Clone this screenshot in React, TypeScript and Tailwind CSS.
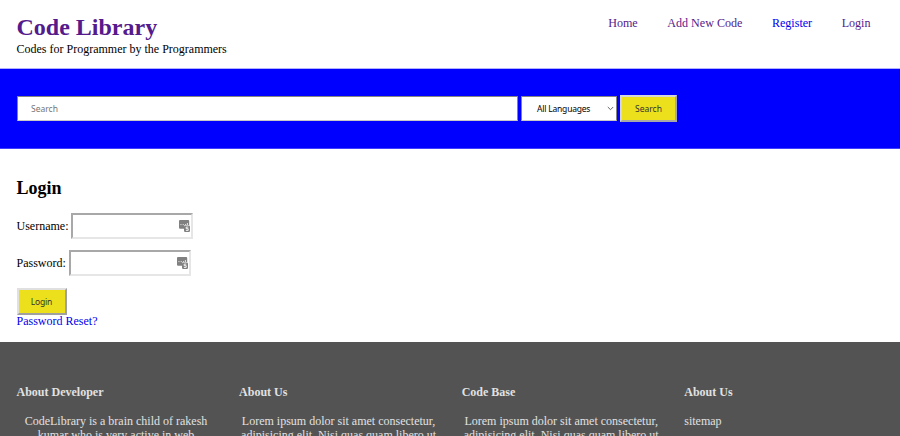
import React from "react";

const ui = "font-['Noto_Sans','Open_Sans',sans-serif]";

function ManagerIcon() {
  return (
    <svg width="11" height="12" viewBox="0 0 11 12" aria-hidden="true">
      <path d="M1 0h8.2a1 1 0 0 1 1 1v4H6a1 1 0 0 0-1 1v2.8H1a1 1 0 0 1-1-1V1a1 1 0 0 1 1-1z" fill="#808080" />
      <path d="M1.4 4.6h1.1M3.7 4.6h1.1M6 4.6h1.1M8.4 3v2" stroke="#fff" strokeWidth="0.8" />
      <rect x="5" y="5.4" width="6" height="6.6" rx="1.2" fill="#808080" />
      <path d="M9.3 7.1H7.2v1.6h2v1.7H6.9" fill="none" stroke="#fff" strokeWidth="0.9" />
    </svg>
  );
}

function Field({ label, type }: { label: string; type: string }) {
  return (
    <label className="flex h-[26px] items-center gap-[3px]">
      <span>{label}</span>
      <span className="flex h-[26px] w-[122px] items-center border-2 border-t-[#a8a8a8] border-l-[#a8a8a8] border-r-[#e6e6e6] border-b-[#e6e6e6] bg-white pr-px">
        <input type={type} className="min-w-0 flex-1 outline-none" />
        <ManagerIcon />
      </span>
    </label>
  );
}

const columns = [
  { title: "About Developer", text: "CodeLibrary is a brain child of rakesh kumar who is very active in web" },
  { title: "About Us", text: "Lorem ipsum dolor sit amet consectetur, adipisicing elit. Nisi quas quam libero ut" },
  { title: "Code Base", text: "Lorem ipsum dolor sit amet consectetur, adipisicing elit. Nisi quas quam libero ut" },
];

export default function App() {
  return (
    <div className="flex h-[436px] w-[900px] flex-col overflow-hidden bg-white font-['Liberation_Serif',serif] text-[12px] leading-[14px] text-black">
      <header className="flex h-[69px] shrink-0 justify-between border-b border-[#b0b0ff] pl-[16.5px] pr-[29.5px]">
        <div className="pt-[13px]">
          <h1 className="text-[24px] leading-[29px] font-bold text-[#551a8b]">Code Library</h1>
          <p>Codes for Programmer by the Programmers</p>
        </div>
        <nav className="flex gap-[29.5px] pt-[16px] text-[12.08px] text-[#551a8b]">
          <a>Home</a>
          <a>Add New Code</a>
          <a className="text-[#0000ee]">Register</a>
          <a>Login</a>
        </nav>
      </header>

      <form className={`flex h-[80px] shrink-0 items-center border-b border-[#4040ff] bg-[#0000ff] pl-[17px] text-[8.5px] ${ui}`}>
        <input
          placeholder="Search"
          className="h-[25px] w-[501px] border border-[#858585] border-b-[#c8c8c8] bg-white px-[13px] placeholder:text-[#757575]"
        />
        <div className="ml-[3px] flex h-[25px] w-[96px] items-center justify-between border border-[#858585] border-b-[#c8c8c8] bg-white pr-[2px] pl-[15px]">
          <span className="tracking-[-0.2px]">All Languages</span>
          <svg width="7" height="5" viewBox="0 0 7 5" fill="none" stroke="#666" strokeWidth="1">
            <path d="M.8 1l2.7 2.7L6.2 1" />
          </svg>
        </div>
        <button className="ml-[3px] h-[27px] w-[57px] border-2 border-[#a8a8a8] border-t-[#d5d5dc] border-l-[#d5d5dc] bg-[#ecdf1c] text-[#333]">Search</button>
      </form>

      <main className="flex h-[193px] shrink-0 flex-col items-start pl-[16.5px]">
        <h2 className="mt-[28px] text-[18px] leading-[22px] font-bold">Login</h2>
        <div className="mt-[14px]">
          <Field label="Username:" type="text" />
        </div>
        <div className="mt-[11px]">
          <Field label="Password:" type="password" />
        </div>
        <button className={`mt-[12px] h-[27px] w-[50px] border-2 border-[#a0a0a0] border-t-[#e0e0e0] border-l-[#e0e0e0] bg-[#ecdf1c] text-[8.5px] tracking-[-0.2px] text-[#333] ${ui}`}>Login</button>
        <a className="-mt-px text-[#0000ee]">Password Reset?</a>
      </main>

      <footer className="grid h-[94px] shrink-0 grid-cols-[repeat(4,222.6px)] bg-[#535353] pt-[43px] pl-[16.5px] text-[#e1e1e1]">
        {columns.map((c, i) => (
          <section key={i} className="w-[199px]">
            <h4 className="font-bold">{c.title}</h4>
            <p className="mt-[16px] text-center leading-[13.5px]">{c.text}</p>
          </section>
        ))}
        <section>
          <h4 className="font-bold">About Us</h4>
          <p className="mt-[16px] leading-[13.5px]">sitemap</p>
        </section>
      </footer>
    </div>
  );
}
